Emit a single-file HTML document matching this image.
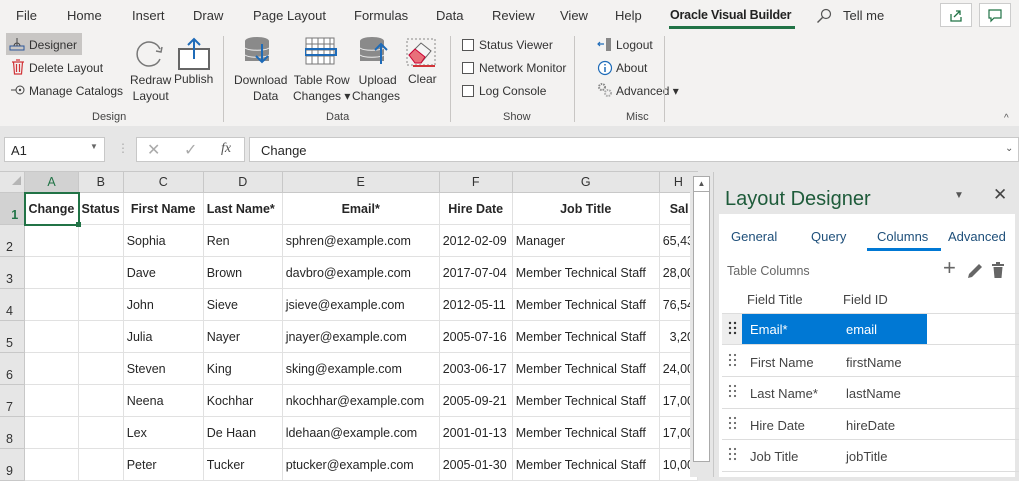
<!DOCTYPE html>
<html><head><meta charset="utf-8"><style>
*{box-sizing:border-box;margin:0;padding:0}
body{width:1019px;height:477px;overflow:hidden;background:#e6e6e6;font-family:"Liberation Sans",sans-serif;font-size:13px;color:#262626;position:relative}
.a{position:absolute;white-space:nowrap}
.tabs span{position:absolute;top:8px;font-size:13px;color:#333}
.lbl{font-size:12px;color:#333}
.grp{font-size:11px;color:#444;top:111px}
.sep{position:absolute;width:1px;background:#c8c6c4;top:36px;height:86px}
.cb{display:inline-block;width:12px;height:12px;border:1px solid #555;background:#fff;vertical-align:-2px;margin-right:5px}
table{border-collapse:collapse;position:absolute;left:-1px;top:171px;table-layout:fixed}
td{border:1px solid #e1e1e1;height:32px;padding:0 3px;font-size:12.5px;vertical-align:middle;background:#fff;overflow:hidden;white-space:nowrap}
tr.h td{height:21px;background:#e6e6e6;text-align:center;color:#333;border-color:#c8c8c8}
td.rh{background:#e6e6e6;text-align:left;vertical-align:bottom;padding:0 0 2px 6px;color:#333;border-color:#c8c8c8}
tr.r1 td{font-weight:bold;text-align:center}
</style></head><body>
<div class="a" style="left:0;top:0;width:1019px;height:126px;background:#f3f2f1"></div>
<div class="tabs">
<span style="left:16px">File</span><span style="left:67px">Home</span><span style="left:132px">Insert</span><span style="left:193px">Draw</span><span style="left:253px">Page Layout</span><span style="left:354px">Formulas</span><span style="left:436px">Data</span><span style="left:492px">Review</span><span style="left:560px">View</span><span style="left:615px">Help</span>
<span style="left:670px;font-weight:bold;color:#222;font-size:12.5px;letter-spacing:-0.2px">Oracle Visual Builder</span>
<span style="left:843px">Tell me</span>
</div>
<div class="a" style="left:669px;top:26px;width:126px;height:3px;background:#217346"></div>
<svg class="a" style="left:816px;top:8px" width="16" height="16"><circle cx="10" cy="6" r="4.5" fill="none" stroke="#555" stroke-width="1.2"/><line x1="6.5" y1="9.5" x2="1.5" y2="14.5" stroke="#555" stroke-width="1.4"/></svg>
<div class="a" style="left:940px;top:3px;width:32px;height:24px;border:1px solid #ccc;background:#fff"></div>
<svg class="a" style="left:948px;top:7px" width="16" height="16"><path d="M3 7v7h10v-4" fill="none" stroke="#217346" stroke-width="1.3"/><path d="M6 10l6-6M8 4h4v4" fill="none" stroke="#217346" stroke-width="1.3"/></svg>
<div class="a" style="left:979px;top:3px;width:32px;height:24px;border:1px solid #ccc;background:#fff"></div>
<svg class="a" style="left:987px;top:7px" width="16" height="16"><path d="M2 3h12v8H7l-3 3v-3H2z" fill="none" stroke="#217346" stroke-width="1.2"/></svg>

<div class="a" style="left:6px;top:33px;width:76px;height:22px;background:#c8c6c4"></div>
<svg class="a" style="left:9px;top:36px" width="16" height="16"><rect x="1" y="10" width="14" height="4" fill="none" stroke="#2b579a"/><path d="M8 2v8M5 10a3 3 0 0 1 6 0" fill="none" stroke="#444"/></svg>
<span class="a lbl" style="left:29px;top:38px">Designer</span>
<svg class="a" style="left:11px;top:59px" width="14" height="16"><path d="M1 3h12M5 1h4M2.5 3l1 12h7l1-12M5.5 5v8M8.5 5v8" fill="none" stroke="#d13438" stroke-width="1.2"/></svg>
<span class="a lbl" style="left:29px;top:61px">Delete Layout</span>
<svg class="a" style="left:11px;top:84px" width="16" height="12"><circle cx="9" cy="6" r="4" fill="none" stroke="#444"/><circle cx="9" cy="6" r="1.2" fill="#444"/><path d="M0 6h5" stroke="#444"/></svg>
<span class="a lbl" style="left:29px;top:84px">Manage Catalogs</span>
<svg class="a" style="left:134px;top:37px" width="32" height="32"><path d="M26 12A12 12 0 1 0 26 22" fill="none" stroke="#777" stroke-width="1.5"/><path d="M22 14l5 1 1-5" fill="none" stroke="#777" stroke-width="1.5"/></svg>
<span class="a lbl" style="left:130px;top:72px;text-align:center;line-height:16px">Redraw<br>Layout</span>
<svg class="a" style="left:178px;top:37px" width="34" height="34"><rect x="1" y="12" width="30" height="20" fill="#fff" stroke="#666" stroke-width="2"/><path d="M16 2v20M10 8l6-6 6 6" fill="none" stroke="#1e6bb8" stroke-width="2"/></svg>
<span class="a lbl" style="left:174px;top:72px">Publish</span>
<span class="a grp" style="left:92px">Design</span>
<div class="sep" style="left:223px"></div>

<svg class="a" style="left:244px;top:36px" width="34" height="30"><ellipse cx="13" cy="5" rx="12" ry="4" fill="#8a8a8a"/><rect x="1" y="5" width="24" height="20" fill="#8a8a8a"/><path d="M1 12c4 3 20 3 24 0M1 19c4 3 20 3 24 0" stroke="#eee" fill="none"/><path d="M18 8v18M12 20l6 6 6-6" fill="none" stroke="#1e6bb8" stroke-width="2"/></svg>
<span class="a lbl" style="left:234px;top:72px;text-align:center;line-height:16px">Download<br>&nbsp;&nbsp;&nbsp;Data</span>
<svg class="a" style="left:305px;top:37px" width="32" height="28"><rect x="1" y="1" width="28" height="26" fill="#fff" stroke="#777"/><path d="M1 7h28M1 13h28M1 19h28M7 1v26M13 1v26M19 1v26M25 1v26" stroke="#777"/><rect x="0" y="12" width="31" height="6" fill="none" stroke="#1e6bb8" stroke-width="2"/></svg>
<span class="a lbl" style="left:293px;top:72px;text-align:center;line-height:16px">Table Row<br>Changes ▾</span>
<svg class="a" style="left:359px;top:36px" width="34" height="30"><ellipse cx="13" cy="5" rx="12" ry="4" fill="#8a8a8a"/><rect x="1" y="5" width="24" height="20" fill="#8a8a8a"/><path d="M1 12c4 3 20 3 24 0M1 19c4 3 20 3 24 0" stroke="#eee" fill="none"/><path d="M22 28V8M16 14l6-6 6 6" fill="none" stroke="#1e6bb8" stroke-width="2"/></svg>
<span class="a lbl" style="left:352px;top:72px;text-align:center;line-height:16px">&nbsp;Upload<br>Changes</span>
<svg class="a" style="left:405px;top:37px" width="32" height="30"><rect x="2" y="2" width="28" height="26" fill="none" stroke="#888" stroke-dasharray="2 2"/><path d="M4 18l12-12 10 8-10 12z" fill="#f5f5f5" stroke="#666"/><path d="M4 18l6-6 10 8-4 6h-6z" fill="#e8707a" stroke="#c03"/><path d="M8 29h22" stroke="#d13438" stroke-width="2"/></svg>
<span class="a lbl" style="left:408px;top:72px">Clear</span>
<span class="a grp" style="left:326px">Data</span>
<div class="sep" style="left:450px"></div>

<span class="a lbl" style="left:462px;top:38px"><i class="cb"></i>Status Viewer</span>
<span class="a lbl" style="left:462px;top:61px"><i class="cb"></i>Network Monitor</span>
<span class="a lbl" style="left:462px;top:84px"><i class="cb"></i>Log Console</span>
<span class="a grp" style="left:503px">Show</span>
<div class="sep" style="left:574px"></div>

<svg class="a" style="left:597px;top:36px" width="16" height="16"><path d="M9 2h5v13H9z" fill="#888"/><path d="M7 8H1M3 6L1 8l2 2" fill="none" stroke="#1e6bb8" stroke-width="1.2"/></svg>
<span class="a lbl" style="left:616px;top:38px">Logout</span>
<svg class="a" style="left:597px;top:60px" width="16" height="16"><circle cx="8" cy="8" r="6.5" fill="#fff" stroke="#1e6bb8" stroke-width="1.2"/><path d="M8 7v5M8 4v1.5" stroke="#1e6bb8" stroke-width="1.5"/></svg>
<span class="a lbl" style="left:616px;top:61px">About</span>
<svg class="a" style="left:597px;top:82px" width="16" height="16"><circle cx="5" cy="5" r="3" fill="none" stroke="#888" stroke-width="2" stroke-dasharray="1.5 1"/><circle cx="11" cy="11" r="3" fill="none" stroke="#aaa" stroke-width="2" stroke-dasharray="1.5 1"/></svg>
<span class="a lbl" style="left:616px;top:84px">Advanced ▾</span>
<span class="a grp" style="left:626px">Misc</span>
<div class="sep" style="left:664px"></div>
<span class="a" style="left:1004px;top:113px;font-size:10px;color:#555">^</span>

<div class="a" style="left:0;top:126px;width:1019px;height:46px;background:#e6e6e6"></div>
<div class="a" style="left:4px;top:137px;width:101px;height:25px;background:#fff;border:1px solid #c8c8c8"></div>
<span class="a" style="left:11px;top:143px">A1</span>
<span class="a" style="left:90px;top:142px;font-size:8px;color:#666">▼</span>
<span class="a" style="left:117px;top:141px;color:#aaa;font-size:12px">⋮</span>
<div class="a" style="left:136px;top:137px;width:109px;height:25px;background:#fff;border:1px solid #c8c8c8"></div>
<span class="a" style="left:147px;top:140px;color:#aaa;font-size:16px">✕</span>
<span class="a" style="left:184px;top:140px;color:#aaa;font-size:16px">✓</span>
<span class="a" style="left:221px;top:141px;color:#555;font-style:italic;font-family:'Liberation Serif',serif;font-size:14px">fx</span>
<div class="a" style="left:249px;top:137px;width:770px;height:25px;background:#fff;border:1px solid #c8c8c8"></div>
<span class="a" style="left:261px;top:143px">Change</span>
<span class="a" style="left:1005px;top:143px;font-size:10px;color:#555">⌄</span>

<table>
<colgroup><col style="width:25px"><col style="width:54px"><col style="width:44px"><col style="width:80px"><col style="width:79px"><col style="width:157px"><col style="width:73px"><col style="width:147px"><col style="width:32px"></colgroup>
<tr class="h"><td style="background:#e6e6e6"></td><td style="background:#d2d2d2;color:#217346;border-bottom:2px solid #217346">A</td><td>B</td><td>C</td><td>D</td><td>E</td><td>F</td><td>G</td><td>H</td></tr>
<tr class="r1"><td class="rh" style="background:#d2d2d2;color:#217346">1</td><td style="border:2px solid #217346;text-align:left;padding-left:3px">Change</td><td style="text-align:left;padding-left:2px">Status</td><td>First Name</td><td style="text-align:left">Last Name*</td><td>Email*</td><td>Hire Date</td><td>Job Title</td><td style="text-align:left;padding-left:10px">Sal</td></tr>
<tr><td class="rh">2</td><td></td><td></td><td>Sophia</td><td>Ren</td><td>sphren@example.com</td><td>2012-02-09</td><td>Manager</td><td>65,43</td></tr>
<tr><td class="rh">3</td><td></td><td></td><td>Dave</td><td>Brown</td><td>davbro@example.com</td><td>2017-07-04</td><td>Member Technical Staff</td><td>28,00</td></tr>
<tr><td class="rh">4</td><td></td><td></td><td>John</td><td>Sieve</td><td>jsieve@example.com</td><td>2012-05-11</td><td>Member Technical Staff</td><td>76,54</td></tr>
<tr><td class="rh">5</td><td></td><td></td><td>Julia</td><td>Nayer</td><td>jnayer@example.com</td><td>2005-07-16</td><td>Member Technical Staff</td><td>&nbsp;&nbsp;3,20</td></tr>
<tr><td class="rh">6</td><td></td><td></td><td>Steven</td><td>King</td><td>sking@example.com</td><td>2003-06-17</td><td>Member Technical Staff</td><td>24,00</td></tr>
<tr><td class="rh">7</td><td></td><td></td><td>Neena</td><td>Kochhar</td><td>nkochhar@example.com</td><td>2005-09-21</td><td>Member Technical Staff</td><td>17,00</td></tr>
<tr><td class="rh">8</td><td></td><td></td><td>Lex</td><td>De Haan</td><td>ldehaan@example.com</td><td>2001-01-13</td><td>Member Technical Staff</td><td>17,00</td></tr>
<tr><td class="rh">9</td><td></td><td></td><td>Peter</td><td>Tucker</td><td>ptucker@example.com</td><td>2005-01-30</td><td>Member Technical Staff</td><td>10,00</td></tr>
</table>
<div class="a" style="left:12px;top:176px;width:0;height:0;border-left:9px solid transparent;border-bottom:9px solid #b5b5b5"></div>
<div class="a" style="left:76px;top:222px;width:5px;height:5px;background:#217346"></div>

<div class="a" style="left:690px;top:172px;width:24px;height:305px;background:#e6e6e6;border-right:1px solid #c8c8c8"></div>
<div class="a" style="left:693px;top:176px;width:17px;height:286px;background:#fff;border:1px solid #aaa"></div>
<div class="a" style="left:693px;top:176px;width:17px;height:16px;border-bottom:1px solid #aaa;font-size:8px;text-align:center;color:#555;line-height:15px">▲</div>

<div class="a" style="left:716px;top:172px;width:303px;height:305px;background:#e6e6e6"></div>
<span class="a" style="left:725px;top:188px;font-size:20px;color:#1e5b3a">Layout Designer</span>
<span class="a" style="left:954px;top:190px;font-size:10px;color:#555">▼</span>
<span class="a" style="left:993px;top:185px;font-size:17px;color:#444">✕</span>
<div class="a" style="left:719px;top:214px;width:296px;height:263px;background:#fff"></div>
<span class="a" style="left:731px;top:229px;color:#1e4f7a">General</span>
<span class="a" style="left:811px;top:229px;color:#1e4f7a">Query</span>
<span class="a" style="left:877px;top:229px;color:#1e4f7a">Columns</span>
<span class="a" style="left:948px;top:229px;color:#1e4f7a">Advanced</span>
<div class="a" style="left:867px;top:248px;width:74px;height:3px;background:#0078d4"></div>
<span class="a" style="left:727px;top:264px;color:#666;font-size:12.5px">Table Columns</span>
<span class="a" style="left:943px;top:255px;font-size:22px;color:#666">+</span>
<svg class="a" style="left:966px;top:262px" width="18" height="17"><path d="M2 16l1-4L13 2l3 3L6 15z" fill="#666"/></svg>
<svg class="a" style="left:991px;top:262px" width="14" height="17"><path d="M1 3h12M5 1h4" stroke="#666" stroke-width="2"/><path d="M2.5 5h9l-1 11h-7z" fill="#666"/></svg>
<span class="a" style="left:747px;top:292px;color:#444">Field Title</span>
<span class="a" style="left:843px;top:292px;color:#444">Field ID</span>
<div class="a" style="left:722px;top:313px;width:300px;height:1px;background:#ddd"></div>
<div class="a" style="left:722px;top:314px;width:20px;height:30px;background:#eee"></div>
<div class="a" style="left:742px;top:314px;width:185px;height:30px;background:#0078d4"></div>
<span class="a" style="left:750px;top:322px;color:#fff">Email*</span>
<span class="a" style="left:846px;top:322px;color:#fff">email</span>
<div class="a" style="left:722px;top:344px;width:300px;height:1px;background:#ddd"></div>
<span class="a" style="left:750px;top:355px;color:#444">First Name</span><span class="a" style="left:846px;top:355px;color:#444">firstName</span>
<div class="a" style="left:722px;top:376px;width:300px;height:1px;background:#ddd"></div>
<span class="a" style="left:750px;top:386px;color:#444">Last Name*</span><span class="a" style="left:846px;top:386px;color:#444">lastName</span>
<div class="a" style="left:722px;top:408px;width:300px;height:1px;background:#ddd"></div>
<span class="a" style="left:750px;top:418px;color:#444">Hire Date</span><span class="a" style="left:846px;top:418px;color:#444">hireDate</span>
<div class="a" style="left:722px;top:439px;width:300px;height:1px;background:#ddd"></div>
<span class="a" style="left:750px;top:449px;color:#444">Job Title</span><span class="a" style="left:846px;top:449px;color:#444">jobTitle</span>
<div class="a" style="left:722px;top:471px;width:300px;height:1px;background:#ddd"></div>
<svg class="a" style="left:727px;top:320px" width="12" height="150"><g fill="#333"><circle cx="3" cy="3" r="1.2"/><circle cx="8" cy="3" r="1.2"/><circle cx="3" cy="8" r="1.2"/><circle cx="8" cy="8" r="1.2"/><circle cx="3" cy="13" r="1.2"/><circle cx="8" cy="13" r="1.2"/></g><g fill="#666"><circle cx="3" cy="35" r="1.1"/><circle cx="8" cy="35" r="1.1"/><circle cx="3" cy="40" r="1.1"/><circle cx="8" cy="40" r="1.1"/><circle cx="3" cy="45" r="1.1"/><circle cx="8" cy="45" r="1.1"/><circle cx="3" cy="66" r="1.1"/><circle cx="8" cy="66" r="1.1"/><circle cx="3" cy="71" r="1.1"/><circle cx="8" cy="71" r="1.1"/><circle cx="3" cy="76" r="1.1"/><circle cx="8" cy="76" r="1.1"/><circle cx="3" cy="98" r="1.1"/><circle cx="8" cy="98" r="1.1"/><circle cx="3" cy="103" r="1.1"/><circle cx="8" cy="103" r="1.1"/><circle cx="3" cy="108" r="1.1"/><circle cx="8" cy="108" r="1.1"/><circle cx="3" cy="129" r="1.1"/><circle cx="8" cy="129" r="1.1"/><circle cx="3" cy="134" r="1.1"/><circle cx="8" cy="134" r="1.1"/><circle cx="3" cy="139" r="1.1"/><circle cx="8" cy="139" r="1.1"/></g></svg>
</body></html>
